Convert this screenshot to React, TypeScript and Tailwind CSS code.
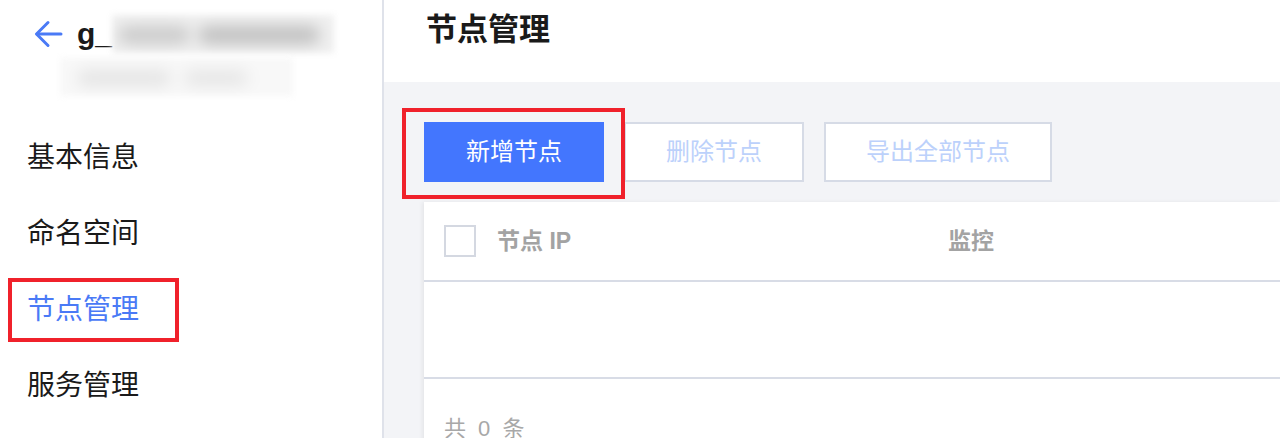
import React from "react";

const menu = [
  { label: "基本信息", active: false },
  { label: "命名空间", active: false },
  { label: "节点管理", active: true },
  { label: "服务管理", active: false },
];

const App = () => {
  return (
    <div
      className="flex h-[438px] w-[1280px] overflow-hidden bg-white"
      style={{ fontFamily: '"Liberation Sans", "Noto Sans CJK SC", sans-serif' }}
    >
      {/* sidebar */}
      <aside className="flex w-[384px] shrink-0 flex-col border-r-2 border-[#dfe2ea] bg-white">
        <div className="relative h-[120px]">
          <div className="flex items-center pl-[34px] pt-[14px]">
            <svg width="29" height="28" viewBox="0 0 29 28" fill="none" stroke="#4a7af6" strokeWidth="3" strokeLinecap="round" strokeLinejoin="round">
              <path d="M27 14H3" />
              <path d="M14 2.5L2.5 14L14 25.5" />
            </svg>
            <span className="ml-[14px] text-[30px] font-bold leading-[40px] text-[#1a1a1a]">g_</span>
            <div className="relative h-[38px] w-[222px] overflow-hidden bg-[#f0f0f0] blur-[3px]">
              <div className="absolute left-[6px] top-[11px] h-[18px] w-[72px] rounded-full bg-[#cacaca] blur-[7px]" />
              <div className="absolute left-[86px] top-[11px] h-[18px] w-[122px] rounded-full bg-[#c0c0c0] blur-[7px]" />
            </div>
          </div>
          <div className="relative ml-[60px] mt-[4px] h-[38px] w-[233px] overflow-hidden bg-[#f8f8f8] blur-[3px]">
            <div className="absolute left-[18px] top-[13px] h-[14px] w-[92px] rounded-full bg-[#e2e2e2] blur-[7px]" />
            <div className="absolute left-[125px] top-[13px] h-[14px] w-[62px] rounded-full bg-[#e4e4e4] blur-[7px]" />
          </div>
        </div>
        <nav className="flex flex-col">
          {menu.map((item) => (
            <div key={item.label} className="relative flex h-[76px] items-center pl-[27px]">
              <span
                className={`text-[28px] leading-none ${
                  item.active ? "text-[#4a7af6]" : "text-[#1a1a1a]"
                }`}
              >
                {item.label}
              </span>
              {item.active && (
                <div className="absolute left-[8px] top-[6px] h-[64px] w-[171px] border-4 border-[#f0212b]" />
              )}
            </div>
          ))}
        </nav>
      </aside>

      {/* main */}
      <main className="flex min-w-0 flex-1 flex-col">
        <header className="h-[82px] shrink-0 bg-white pl-[42px] pt-[14px]">
          <h1 className="text-[31px] font-bold leading-[32px] text-[#1a1a1a]">节点管理</h1>
        </header>

        <section className="flex flex-1 flex-col bg-[#f3f4f7] pl-[40px] pt-[40px]">
          <div className="relative flex gap-[20px]">
            <button className="h-[60px] w-[180px] bg-[#4376fe] text-[24px] text-white">新增节点</button>
            <button className="h-[60px] w-[180px] border-2 border-[#d6dbe6] bg-white text-[24px] text-[#bcd1fb]">
              删除节点
            </button>
            <button className="h-[60px] w-[228px] border-2 border-[#d6dbe6] bg-white text-[24px] text-[#bcd1fb]">
              导出全部节点
            </button>
            <div className="absolute left-[-22px] top-[-14px] h-[91px] w-[223px] border-4 border-[#f0212b]" />
          </div>

          <div className="mt-[20px] flex flex-1 flex-col bg-white shadow-[-2px_0_4px_rgba(0,0,0,0.06)]">
            <div className="flex h-[80px] items-center border-b-2 border-[#d8dce6]">
              <div className="flex w-[524px] items-center pl-[20px]">
                <span className="h-[32px] w-[32px] border-2 border-[#d4d8e1] bg-white" />
                <span className="ml-[21px] text-[23px] font-bold text-[#a3a3a3]">节点 IP</span>
              </div>
              <span className="text-[23px] font-bold text-[#a3a3a3]">监控</span>
            </div>
            <div className="h-[97px] border-b-2 border-[#d8dce6]" />
            <div className="pl-[20px] pt-[35px]">
              <span className="text-[22px] leading-[30px] tracking-[3px] text-[#a8a8a8]">共 0 条</span>
            </div>
          </div>
        </section>
      </main>
    </div>
  );
};

export default App;
